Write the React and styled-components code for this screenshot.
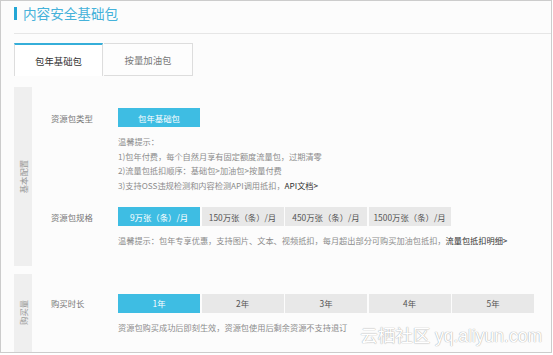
import React from "react";
import styled, { createGlobalStyle } from "styled-components";

const Global = createGlobalStyle`
  html, body { margin: 0; padding: 0; background: #ffffff; }
  body { font-family: "Noto Sans CJK SC", "Liberation Sans", sans-serif; }
  * { box-sizing: border-box; }
`;

const Frame = styled.div`
  position: relative;
  width: 552px;
  height: 353px;
  border: 1px solid #cccccc;
  background: #fcfcfc;
  padding-left: 13px;
  overflow: hidden;
`;

const Header = styled.div`
  height: 33px;
  padding-top: 6px;
  border-bottom: 1px solid #e6e6e6;
  display: flex;
  align-items: flex-start;
  gap: 6px;
`;

const Bar = styled.span`
  width: 3px;
  height: 13px;
  background: #23a6d5;
`;

const Title = styled.h1`
  margin: 0;
  font-size: 13.6px;
  line-height: 14px;
  font-weight: 400;
  color: #45b2da;
  margin-top: -1px;
`;

const Tabs = styled.div`
  display: flex;
  margin-top: 9px;
`;

const Tab = styled.div`
  width: 89px;
  height: 33px;
  display: flex;
  align-items: center;
  justify-content: center;
  font-size: 9.4px;
  color: ${(p) => (p.$active ? "#333" : "#777")};
  background: ${(p) => (p.$active ? "#ffffff" : "#fdfdfd")};
  border: 1px solid #dddddd;
  border-top: ${(p) => (p.$active ? "2px solid #35aed9" : "1px solid #dddddd")};
  border-bottom: ${(p) => (p.$active ? "none" : "1px solid #dddddd")};
  & + & { border-left: none; margin-left: 1px; }
`;

const Section = styled.section`
  display: flex;
  margin-top: ${(p) => p.$gap}px;
`;

const Side = styled.div`
  width: 18px;
  flex: none;
  background: #efefef;
  display: flex;
  align-items: center;
  justify-content: center;
`;

const SideText = styled.span`
  writing-mode: vertical-rl;
  text-orientation: sideways;
  transform: rotate(180deg);
  font-size: 8.3px;
  line-height: 10px;
  color: #9a9a9a;
`;

const Body = styled.div`
  flex: 1;
  padding: ${(p) => p.$top}px 0 18px 19px;
`;

const Row = styled.div`
  display: flex;
  align-items: center;
  margin-top: ${(p) => p.$gap || 0}px;
`;

const Label = styled.div`
  width: 67px;
  font-size: 8.4px;
  line-height: 12px;
  color: #777;
`;

const Options = styled.div`
  display: flex;
  gap: 1.5px;
`;

const Option = styled.div`
  width: 82px;
  height: 19px;
  display: flex;
  align-items: center;
  justify-content: center;
  font-size: 8.4px;
  color: ${(p) => (p.$active ? "#ffffff" : "#555")};
  background: ${(p) => (p.$active ? "#3ebde3" : "#e8e8e8")};
`;

const Hint = styled.div`
  margin: 7px 0 0 67px;
  font-size: 8.2px;
  line-height: 14.5px;
  color: #8c8c8c;
  white-space: nowrap;
`;

const Link = styled.span`
  color: #333;
`;

const Watermark = styled.div`
  position: absolute;
  right: 9px;
  bottom: 6px;
  font-family: "Liberation Sans", "Noto Sans CJK SC", sans-serif;
  font-size: 17.5px;
  line-height: 20px;
  color: #ffffff;
  text-shadow: 0 0 1px #a8a8a8, 0 0 1px #b8b8b8;
  white-space: nowrap;
`;

const specs = ["9万张（条）/月", "150万张（条）/月", "450万张（条）/月", "1500万张（条）/月"];
const years = ["1年", "2年", "3年", "4年", "5年"];

export default function App() {
  return (
    <>
      <Global />
      <Frame>
        <Header>
          <Bar />
          <Title>内容安全基础包</Title>
        </Header>
        <Tabs>
          <Tab $active>包年基础包</Tab>
          <Tab>按量加油包</Tab>
        </Tabs>
        <Section $gap={11}>
          <Side>
            <SideText>基本配置</SideText>
          </Side>
          <Body $top={21}>
            <Row>
              <Label>资源包类型</Label>
              <Options>
                <Option $active>包年基础包</Option>
              </Options>
            </Row>
            <Hint>
              温馨提示：
              <br />
              1)包年付费，每个自然月享有固定额度流量包，过期清零
              <br />
              2)流量包抵扣顺序：基础包&gt;加油包&gt;按量付费
              <br />
              3)支持OSS违规检测和内容检测API调用抵扣，<Link>API文档&gt;</Link>
            </Hint>
            <Row $gap={15}>
              <Label>资源包规格</Label>
              <Options>
                {specs.map((s, i) => (
                  <Option key={s} $active={i === 0}>{s}</Option>
                ))}
              </Options>
            </Row>
            <Hint>
              温馨提示：包年专享优惠，支持图片、文本、视频抵扣，每月超出部分可购买加油包抵扣，<Link>流量包抵扣明细&gt;</Link>
            </Hint>
          </Body>
        </Section>
        <Section $gap={8}>
          <Side>
            <SideText>购买量</SideText>
          </Side>
          <Body $top={20}>
            <Row>
              <Label>购买时长</Label>
              <Options>
                {years.map((y, i) => (
                  <Option key={y} $active={i === 0}>{y}</Option>
                ))}
              </Options>
            </Row>
            <Hint>资源包购买成功后即刻生效，资源包使用后剩余资源不支持退订</Hint>
          </Body>
        </Section>
        <Watermark>云栖社区 yq.aliyun.com</Watermark>
      </Frame>
    </>
  );
}
